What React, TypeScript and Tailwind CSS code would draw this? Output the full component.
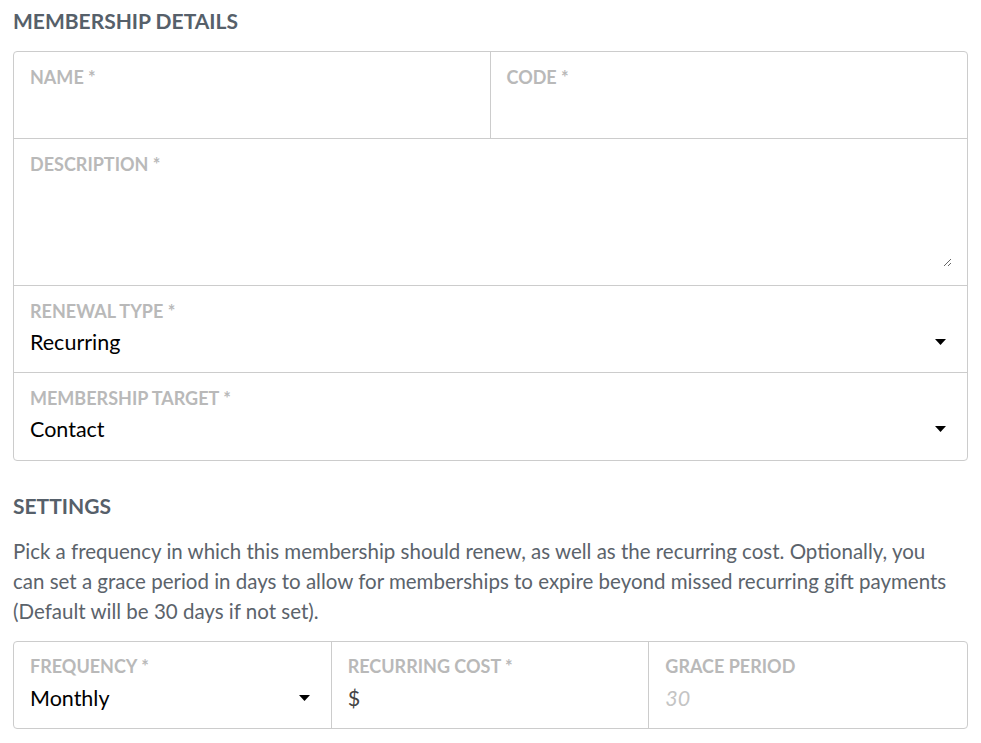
import React from "react";

const Caret = () => (
  <svg width="11" height="6" viewBox="0 0 11 6" className="shrink-0">
    <path d="M0 0 L11 0 L5.5 6 Z" fill="#000" />
  </svg>
);

function Label({ children }: { children: React.ReactNode }) {
  return <div className="text-[18px] leading-[20px] font-bold text-[#b9b9b9]">{children}</div>;
}

function Cell({
  label,
  value,
  caret,
  className = "",
  valueClass = "text-black",
  tight = false,
}: {
  label: string;
  value?: string;
  caret?: boolean;
  className?: string;
  valueClass?: string;
  tight?: boolean;
}) {
  return (
    <div className={(tight ? "pt-[14px] " : "pt-[15px] ") + "pl-[16px] pr-[21px] " + className}>
      <Label>{label}</Label>
      <div className={(tight ? "mt-[8px] " : "mt-[7px] ") + "h-[28px] flex items-center justify-between"}>
        <span className={"text-[21.5px] leading-[28px] " + valueClass}>{value ?? ""}</span>
        {caret && <Caret />}
      </div>
    </div>
  );
}

export default function App() {
  return (
    <div
      className="bg-white w-[981px] h-[743px] overflow-hidden px-[13px] pt-[9px]"
      style={{ fontFamily: "Lato, 'Noto Sans', sans-serif" }}
    >
      <h2 className="text-[21px] leading-[24px] font-bold text-[#56606a]">MEMBERSHIP DETAILS</h2>
      <div className="mt-[18px] w-[955px] border border-[#cccccc] rounded-[4px]">
        <div className="grid grid-cols-2 border-b border-[#cccccc] h-[87px]">
          <Cell label="NAME *" className="border-r border-[#cccccc]" />
          <Cell label="CODE *" />
        </div>
        <div className="h-[147px] border-b border-[#cccccc] pl-[16px] pr-[15px] pt-[15px] flex flex-col">
          <Label>DESCRIPTION *</Label>
          <textarea
            className="mt-[5px] h-[88px] w-full resize-y outline-none text-[20px] bg-transparent"
            style={{ fontFamily: "Lato, sans-serif" }}
          />
        </div>
        <Cell label="RENEWAL TYPE *" value="Recurring" caret className="border-b border-[#cccccc] h-[87px]" />
        <Cell label="MEMBERSHIP TARGET *" value="Contact" caret className="h-[87px]" />
      </div>

      <h2 className="mt-[33px] text-[21px] leading-[24px] font-bold text-[#56606a]">SETTINGS</h2>
      <p className="mt-[18px] text-[20.5px] leading-[30px] text-[#5b636b] w-[945px]">
        Pick a frequency in which this membership should renew, as well as the recurring cost. Optionally, you can set a
        grace period in days to allow for memberships to expire beyond missed recurring gift payments (Default will be 30
        days if not set).
      </p>
      <div className="mt-[15px] w-[955px] h-[88px] border border-[#cccccc] rounded-[4px] grid grid-cols-3">
        <Cell tight label="FREQUENCY *" value="Monthly" caret className="border-r border-[#cccccc] pr-[20px]" />
        <Cell tight label="RECURRING COST *" value="$" className="border-r border-[#cccccc]" valueClass="text-[#444]" />
        <Cell tight label="GRACE PERIOD" value="30" valueClass="text-[#c4c4c4] italic" />
      </div>
    </div>
  );
}
